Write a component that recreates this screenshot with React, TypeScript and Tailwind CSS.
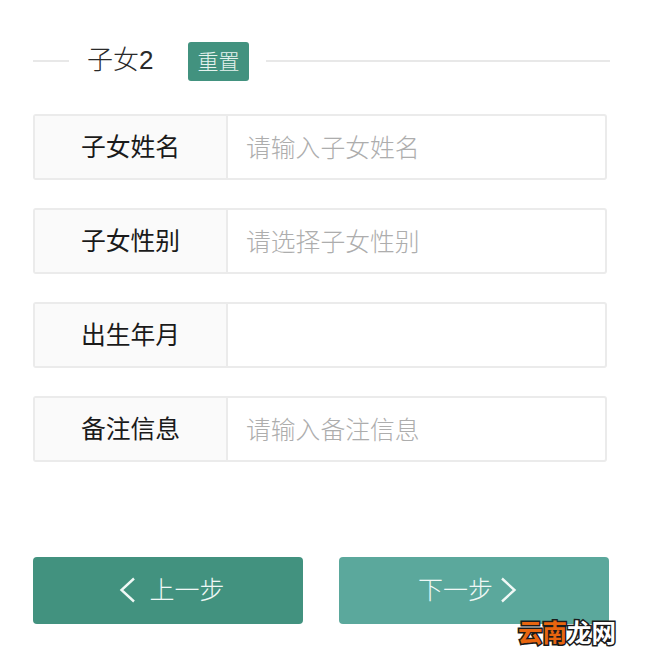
const FONT = "font-['Liberation_Sans','Noto_Sans_CJK_SC',sans-serif]";

const rows = [
  { label: "子女姓名", placeholder: "请输入子女姓名" },
  { label: "子女性别", placeholder: "请选择子女性别" },
  { label: "出生年月", placeholder: "" },
  { label: "备注信息", placeholder: "请输入备注信息" },
];

function Chevron({ left }: { left?: boolean }) {
  return (
    <svg className="-mt-[2px]" width="16" height="26" viewBox="0 0 16 26" fill="none" stroke="currentColor" strokeWidth="2.4">
      <path d={left ? "M15 1.5 L2.5 13 L15 24.5" : "M1 1.5 L13.5 13 L1 24.5"} />
    </svg>
  );
}

export default function App() {
  return (
    <div className={`relative w-[652px] h-[665px] bg-white overflow-hidden pl-[33px] pr-[42px] pt-[42px] ${FONT}`}>
      <div className="flex items-center h-[39px]">
        <div className="w-[36px] h-[2px] bg-[#e8e8e8] -mt-[2px]" />
        <div className="ml-[18px] w-[101px] pb-[3px] text-[26px] font-light text-[#2a2a2a] leading-none">子女2</div>
        <button className="w-[61px] h-[39px] rounded-[3px] bg-[#42927f] text-[#e6f3ef] text-[21px] font-light leading-none">重置</button>
        <div className="ml-[17px] flex-1 h-[2px] bg-[#e8e8e8] -mt-[2px]" />
      </div>

      <div className="mt-[33px] flex flex-col gap-[28px] w-[574px]">
        {rows.map(r => (
          <div key={r.label} className="flex h-[66px] rounded-[3px] border-2 border-[#ebebeb] bg-white overflow-hidden">
            <div className="w-[193px] shrink-0 flex items-center justify-center pt-[2px] bg-[#fafafa] border-r-2 border-[#ebebeb] text-[24.8px] text-[#1a1a1a] font-normal">
              {r.label}
            </div>
            <div className="pl-[18px] pt-[3px] flex items-center text-[24.8px] text-[#adadad] font-light">{r.placeholder}</div>
          </div>
        ))}
      </div>

      <div className="mt-[95px] flex justify-between w-[576px]">
        <button className="w-[270px] h-[67px] pl-[8px] rounded-[4px] bg-[#42927f] text-[#f0f8f6] flex items-center justify-center gap-[14px] text-[25px] font-light">
          <Chevron left />
          <span>上一步</span>
        </button>
        <button className="w-[270px] h-[67px] pr-[13px] rounded-[4px] bg-[#5ba89c] text-[#f0f8f6] flex items-center justify-center gap-[8px] text-[25px] font-light">
          <span>下一步</span>
          <Chevron />
        </button>
      </div>

      <div className="absolute left-[518px] top-[622px] text-[24.5px] font-bold leading-none [paint-order:stroke_fill] [-webkit-text-stroke:3px_#1a1a1a]">
        <span className="text-[#e8650f]">云南</span>
        <span className="text-white">龙网</span>
      </div>
    </div>
  );
}
